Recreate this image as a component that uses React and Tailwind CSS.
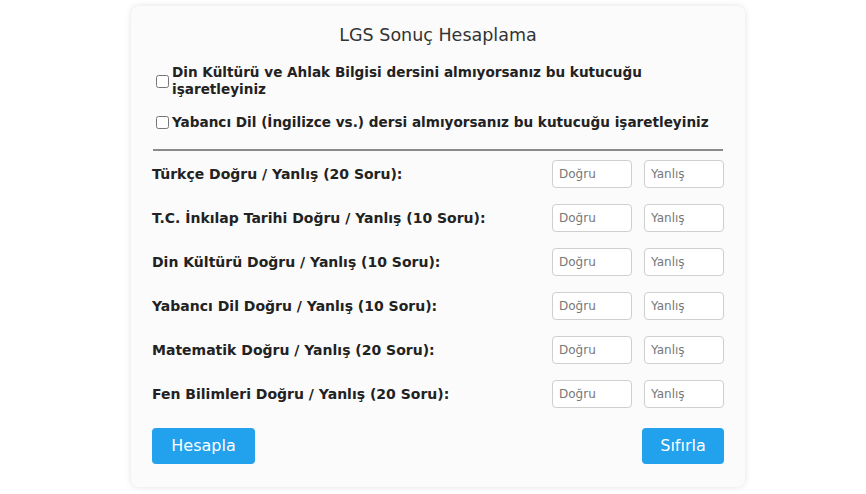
import React from "react";

const dersler = [
  "Türkçe Doğru / Yanlış (20 Soru):",
  "T.C. İnkılap Tarihi Doğru / Yanlış (10 Soru):",
  "Din Kültürü Doğru / Yanlış (10 Soru):",
  "Yabancı Dil Doğru / Yanlış (10 Soru):",
  "Matematik Doğru / Yanlış (20 Soru):",
  "Fen Bilimleri Doğru / Yanlış (20 Soru):",
];

export default function App() {
  return (
    <div className="min-h-[494px] w-full bg-white pt-[6px]" style={{ fontFamily: '"DejaVu Sans", sans-serif' }}>
      <div className="ml-[131px] w-[614px] rounded-lg bg-[#fbfbfb] px-[21px] pb-[23px] pt-[18px] shadow-[0_0_6px_rgba(0,0,0,0.12)]">
        {/* Başlık */}
        <h1 className="text-center text-[17.5px] font-normal leading-[22px] text-[#333]">
          LGS Sonuç Hesaplama
        </h1>

        {/* Seçenekler */}
        <div className="mt-[18px] flex flex-col gap-[16px] pl-[4px]">
          <label className="flex items-center gap-[3px] text-[13.6px] font-semibold leading-[17px] text-[#222]">
            <input type="checkbox" className="h-[13px] w-[13px] shrink-0" />
            <span>Din Kültürü ve Ahlak Bilgisi dersini almıyorsanız bu kutucuğu işaretleyiniz</span>
          </label>
          <label className="flex items-center gap-[3px] text-[13.6px] font-semibold leading-[17px] text-[#222]">
            <input type="checkbox" className="h-[13px] w-[13px] shrink-0" />
            <span>Yabancı Dil (İngilizce vs.) dersi almıyorsanız bu kutucuğu işaretleyiniz</span>
          </label>
        </div>

        <hr className="mt-[18px] border-t-2 border-[#8a8a8a] mx-[1px]" />

        {/* Ders satırları */}
        <div className="mt-[9px] flex flex-col gap-[16px]">
          {dersler.map((d) => (
            <div key={d} className="flex items-center justify-between">
              <span className="text-[14px] font-semibold text-[#222]">{d}</span>
              <div className="flex gap-[12px]">
                <input
                  placeholder="Doğru"
                  className="h-[28px] w-[80px] rounded-[4px] border border-[#cfcfcf] bg-white px-[6px] text-[12px] placeholder:text-[#777] outline-none"
                />
                <input
                  placeholder="Yanlış"
                  className="h-[28px] w-[80px] rounded-[4px] border border-[#cfcfcf] bg-white px-[6px] text-[12px] placeholder:text-[#777] outline-none"
                />
              </div>
            </div>
          ))}
        </div>

        {/* Butonlar */}
        <div className="mt-[20px] flex justify-between">
          <button className="h-[36px] w-[103px] rounded-[4px] bg-[#22a1ec] text-[16px] text-white">Hesapla</button>
          <button className="h-[36px] w-[82px] rounded-[4px] bg-[#22a1ec] text-[16px] text-white">Sıfırla</button>
        </div>
      </div>
    </div>
  );
}
